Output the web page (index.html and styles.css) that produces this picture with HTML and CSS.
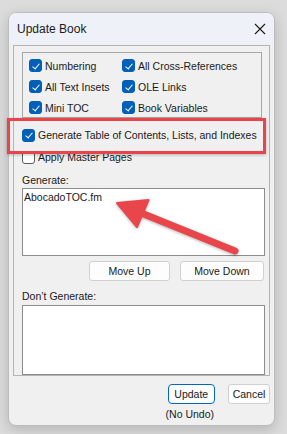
FILE: index.html
```html
<!DOCTYPE html>
<html>
<head>
    <meta name="viewport" content="width=device-width, initial-scale=1">
    <link rel="stylesheet" href="styles.css">
</head>
<body>
    <div class="screen">
        <div class="window">
            <div class="titlebar">
                <span class="title">Update Book</span>
                <svg class="close" width="12" height="12" viewBox="0 0 12 12">
                    <path d="M1 1 L11 11 M11 1 L1 11" stroke="#1a1a1a" stroke-width="1.1" fill="none"/>
                </svg>
            </div>

            <div class="group">
                <!--=========== OPCIONES ===========-->
                <div class="options">
                    <label class="check"><span class="box on"></span>Numbering</label>
                    <label class="check"><span class="box on"></span>All Cross-References</label>
                    <label class="check"><span class="box on"></span>All Text Insets</label>
                    <label class="check"><span class="box on"></span>OLE Links</label>
                    <label class="check"><span class="box on"></span>Mini TOC</label>
                    <label class="check"><span class="box on"></span>Book Variables</label>
                </div>

                <label class="check row"><span class="box on"></span>Generate Table of Contents, Lists, and Indexes</label>
                <label class="check row"><span class="box"></span>Apply Master Pages</label>

                <div class="field_label first">Generate:</div>
                <div class="listbox gen">
                    <div class="item">AbocadoTOC.fm</div>
                </div>

                <div class="move_buttons">
                    <button class="button move_up">Move Up</button>
                    <button class="button move_down">Move Down</button>
                </div>

                <div class="field_label">Don’t Generate:</div>
                <div class="listbox nogen"></div>
            </div>

            <div class="footer">
                <div class="update_col">
                    <button class="button update">Update</button>
                    <span class="no_undo">(No Undo)</span>
                </div>
                <button class="button cancel">Cancel</button>
            </div>
        </div>

        <!--=========== ANOTACIONES ===========-->
        <div class="highlight"></div>
        <svg class="arrow" width="287" height="434" viewBox="0 0 287 434">
            <line x1="235" y1="251" x2="140" y2="212.5" stroke="#e9464c" stroke-width="7" stroke-linecap="round"/>
            <polygon points="117,203 148.5,200 137,227" fill="#e9464c" stroke="#e9464c" stroke-width="2" stroke-linejoin="round"/>
        </svg>
    </div>
</body>
</html>
```

FILE: styles.css
```css
body {
    font-family: 'Liberation Sans', Arial, sans-serif;
    background-color: #dcdcdc;
    margin: 0;
    color: #1a1a1a;
}

.screen {
    position: relative;
    width: 287px;
    height: 434px;
    padding: 12px 0 0 8px;
    box-sizing: border-box;
}

.window {
    width: 267px;
    height: 414px;
    box-sizing: border-box;
    border: 1px solid #bdbdbd;
    border-radius: 8px;
    background-color: #f0f0f0;
    box-shadow: 0 4px 14px rgba(0, 0, 0, 0.18);
    overflow: hidden;
    font-size: 10.5px;
}

.titlebar {
    height: 31px;
    background-color: #eef2f8;
    display: flex;
    align-items: center;
    justify-content: space-between;
    padding: 0 8px 0 8px;
}

.title {
    font-size: 12px;
}

.close {
    display: block;
    margin-top: 1px;
}

/* caja principal */
.group {
    margin: 1px 4px 0 4px;
    height: 331px;
    box-sizing: border-box;
    border: 1px solid #b4b4b4;
    padding: 6px 4px 0 8px;
}

.options {
    height: 66px;
    width: 240px;
    box-sizing: border-box;
    border: 1px solid #a8a8a8;
    padding: 2px 0 0 6px;
    display: grid;
    grid-template-columns: 93px 1fr;
    grid-template-rows: 21px 21px 21px;
}

.check {
    display: flex;
    align-items: center;
    gap: 3px;
    white-space: nowrap;
}

.check.row {
    height: 22px;
}

.options + .check.row {
    margin-top: 6px;
}

.box {
    width: 13px;
    height: 13px;
    box-sizing: border-box;
    border: 1px solid #5a5a5a;
    border-radius: 3px;
    background-color: #ffffff;
    flex: none;
    position: relative;
}

.box.on {
    background-color: #005fb8;
    border-color: #005fb8;
}

.box.on::after {
    content: "";
    position: absolute;
    left: 3.5px;
    top: 1.5px;
    width: 3px;
    height: 6px;
    border-right: 1.3px solid #ffffff;
    border-bottom: 1.3px solid #ffffff;
    transform: rotate(40deg);
}

.field_label {
    line-height: 14px;
    margin-top: 8px;
}

.field_label.first {
    margin-top: 5px;
}

.listbox {
    width: 243px;
    box-sizing: border-box;
    border: 1px solid #8c8c8c;
    background-color: #ffffff;
    margin-top: 1px;
    padding: 1px 1px;
}

.listbox.gen {
    height: 68px;
}

.listbox.nogen {
    height: 70px;
    margin-top: 2px;
}

.item {
    line-height: 14px;
}

.button {
    font-family: 'Liberation Sans', Arial, sans-serif;
    font-size: 10.5px;
    color: #1a1a1a;
    background-color: #fdfdfd;
    border: 1px solid #d0d0d0;
    border-radius: 3px;
    height: 20px;
    padding: 0;
    cursor: pointer;
}

.move_buttons {
    display: flex;
    justify-content: flex-end;
    gap: 10px;
    margin-top: 5px;
    padding-right: 1px;
}

.move_up {
    width: 81px;
}

.move_down {
    width: 84px;
}

.footer {
    display: flex;
    justify-content: flex-end;
    align-items: flex-start;
    gap: 11px;
    margin-top: 8px;
    padding-right: 4px;
}

.update_col {
    display: flex;
    flex-direction: column;
    align-items: center;
}

.update {
    width: 47px;
    border: 1px solid #0067c0;
    border-radius: 4px;
    box-shadow: inset 0 0 0 1px #ffffff;
}

.cancel {
    width: 42px;
}

.no_undo {
    margin-top: 3px;
    line-height: 14px;
    margin-right: 3px;
}

/* anotaciones en rojo */
.highlight {
    position: absolute;
    left: 7px;
    top: 118px;
    width: 259px;
    height: 36px;
    box-sizing: border-box;
    border: 3px solid #e8444b;
    box-shadow: 0 1px 3px rgba(0, 0, 0, 0.25);
}

.arrow {
    position: absolute;
    left: 0;
    top: 0;
    pointer-events: none;
    filter: drop-shadow(0 1px 1.5px rgba(0, 0, 0, 0.3));
}
```
